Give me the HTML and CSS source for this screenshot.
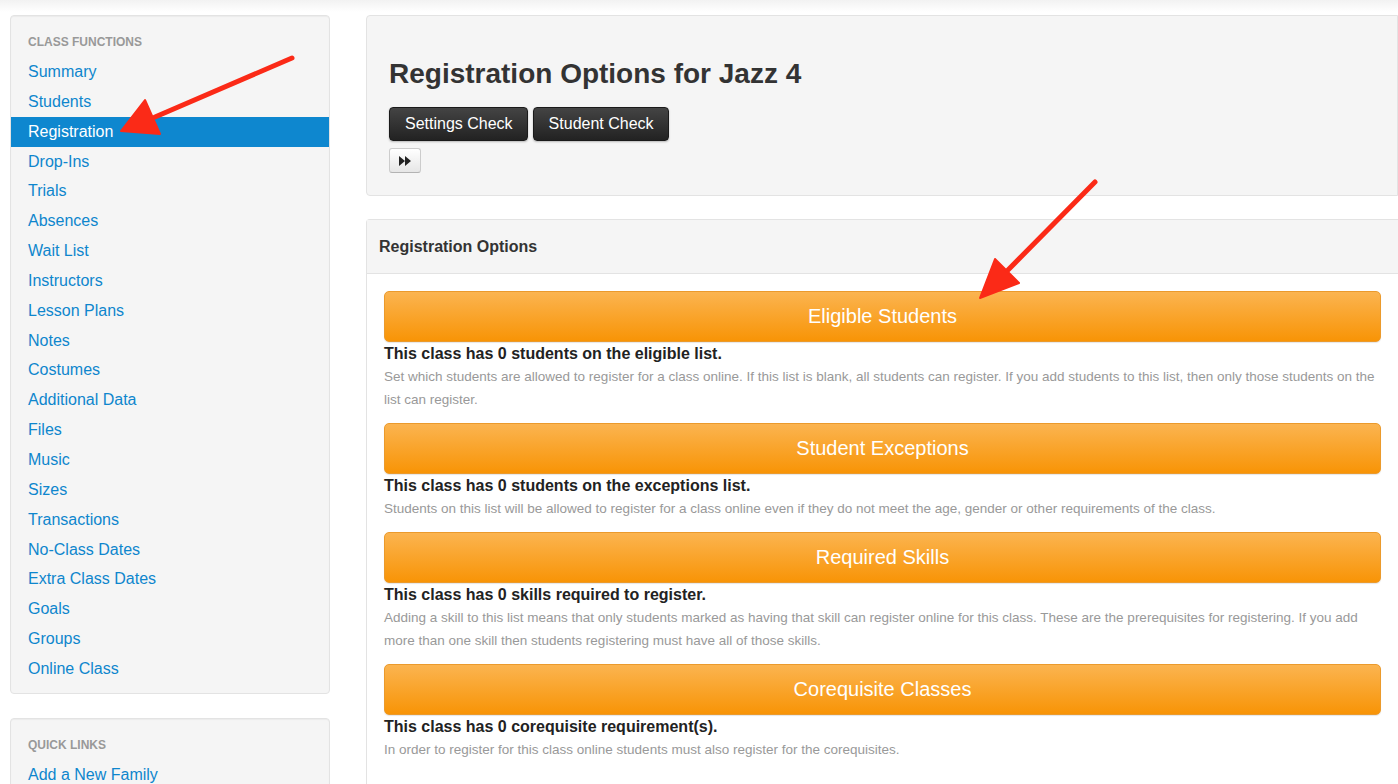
FILE: index.html
```html
<!DOCTYPE html>
<html>
<head>
    <link rel="stylesheet" href="styles.css">
</head>
<body>
    <div class="page">
        <div class="sidebar">
            <div class="well">
                <div class="nav-header">Class Functions</div>
                <a class="nav-link" href="#">Summary</a>
                <a class="nav-link" href="#">Students</a>
                <a class="nav-link active" href="#">Registration</a>
                <a class="nav-link" href="#">Drop-Ins</a>
                <a class="nav-link" href="#">Trials</a>
                <a class="nav-link" href="#">Absences</a>
                <a class="nav-link" href="#">Wait List</a>
                <a class="nav-link" href="#">Instructors</a>
                <a class="nav-link" href="#">Lesson Plans</a>
                <a class="nav-link" href="#">Notes</a>
                <a class="nav-link" href="#">Costumes</a>
                <a class="nav-link" href="#">Additional Data</a>
                <a class="nav-link" href="#">Files</a>
                <a class="nav-link" href="#">Music</a>
                <a class="nav-link" href="#">Sizes</a>
                <a class="nav-link" href="#">Transactions</a>
                <a class="nav-link" href="#">No-Class Dates</a>
                <a class="nav-link" href="#">Extra Class Dates</a>
                <a class="nav-link" href="#">Goals</a>
                <a class="nav-link" href="#">Groups</a>
                <a class="nav-link" href="#">Online Class</a>
            </div>
            <div class="well">
                <div class="nav-header">Quick Links</div>
                <a class="nav-link" href="#">Add a New Family</a>
            </div>
        </div>

        <div class="main">
            <div class="title-panel">
                <h1 class="title">Registration Options for Jazz 4</h1>
                <div class="btn-row">
                    <button class="btn-dark">Settings Check</button>
                    <button class="btn-dark">Student Check</button>
                </div>
                <button class="btn-small">
                    <svg width="12" height="10" viewBox="0 0 12 10"><path d="M0 0 L6 5 L0 10 Z M6 0 L12 5 L6 10 Z" fill="#222"/></svg>
                </button>
            </div>

            <div class="panel">
                <div class="panel-heading">Registration Options</div>
                <div class="panel-body">
                    <button class="btn-orange">Eligible Students</button>
                    <div class="opt-title">This class has 0 students on the eligible list.</div>
                    <div class="opt-desc">Set which students are allowed to register for a class online. If this list is blank, all students can register. If you add students to this list, then only those students on the list can register.</div>

                    <button class="btn-orange">Student Exceptions</button>
                    <div class="opt-title">This class has 0 students on the exceptions list.</div>
                    <div class="opt-desc">Students on this list will be allowed to register for a class online even if they do not meet the age, gender or other requirements of the class.</div>

                    <button class="btn-orange">Required Skills</button>
                    <div class="opt-title">This class has 0 skills required to register.</div>
                    <div class="opt-desc">Adding a skill to this list means that only students marked as having that skill can register online for this class. These are the prerequisites for registering. If you add more than one skill then students registering must have all of those skills.</div>

                    <button class="btn-orange">Corequisite Classes</button>
                    <div class="opt-title">This class has 0 corequisite requirement(s).</div>
                    <div class="opt-desc">In order to register for this class online students must also register for the corequisites.</div>
                </div>
            </div>
        </div>
    </div>

    <svg class="arrows" width="1398" height="784" viewBox="0 0 1398 784">
        <g fill="#fb2a17" stroke="#fb2a17" stroke-linecap="round">
            <line x1="292" y1="58" x2="155" y2="117" stroke-width="5"/>
            <polygon points="121,131 145,100 160,134" stroke-width="2" stroke-linejoin="round"/>
            <line x1="1095" y1="182" x2="1008" y2="270" stroke-width="5"/>
            <polygon points="980,298 995,259 1019,283" stroke-width="2" stroke-linejoin="round"/>
        </g>
    </svg>
</body>
</html>
```

FILE: styles.css
```css
body
{
    margin: 0;
    font-family: "Liberation Sans", Arial, sans-serif;
    color: #333;
    background: linear-gradient(#f2f2f2, #ffffff 12px) no-repeat;
    background-color: #fff;
    height: 784px;
    overflow: hidden;
}
.page
{
    display: flex;
    gap: 36px;
    padding: 15px 0 0 10px;
}
.sidebar
{
    width: 320px;
    flex-shrink: 0;
}
.well
{
    background-color: #f5f5f5;
    border: 1px solid #e3e3e3;
    border-radius: 4px;
    padding: 11px 0 9px 0;
    margin-bottom: 24px;
    box-shadow: inset 0 1px 1px rgba(0,0,0,0.04);
}
.nav-header
{
    font-size: 12px;
    font-weight: bold;
    text-transform: uppercase;
    color: #999;
    line-height: 30px;
    padding-left: 17px;
}
.nav-link
{
    display: block;
    font-size: 16px;
    line-height: 29.85px;
    height: 29.85px;
    color: #0e86cd;
    text-decoration: none;
    padding-left: 17px;
}
.nav-link.active
{
    background-color: #0e87cf;
    color: #fff;
}
.main
{
    flex: 1;
}
.title-panel
{
    background-color: #f5f5f5;
    border: 1px solid #e3e3e3;
    border-radius: 4px 0 0 4px;
    padding: 41px 22px 22px 22px;
    margin-bottom: 23px;
}
.title
{
    font-size: 28px;
    line-height: 34px;
    margin: 0 0 16px 0;
    color: #333;
}
.btn-row
{
    display: flex;
    gap: 5px;
    margin-bottom: 7px;
}
.btn-dark
{
    font-family: "Liberation Sans", Arial, sans-serif;
    font-size: 16px;
    height: 34px;
    padding: 0 14px 0 15px;
    color: #fff;
    background: linear-gradient(#444, #222);
    border: 1px solid #1a1a1a;
    border-radius: 4px;
    box-shadow: 0 1px 2px rgba(0,0,0,0.25);
}
.btn-small
{
    display: flex;
    align-items: center;
    justify-content: center;
    width: 32px;
    height: 25px;
    padding: 0;
    background: linear-gradient(#fff, #e6e6e6);
    border: 1px solid #ccc;
    border-bottom-color: #b3b3b3;
    border-radius: 3px;
}
.panel
{
    border: 1px solid #e3e3e3;
    border-right: none;
    border-radius: 4px 0 0 0;
    height: 600px;
}
.panel-heading
{
    background-color: #f5f5f5;
    border-bottom: 1px solid #e3e3e3;
    font-size: 16px;
    font-weight: bold;
    line-height: 53px;
    padding-left: 12px;
}
.panel-body
{
    padding: 17px 17px 0 17px;
    background-color: #fff;
}
.btn-orange
{
    display: block;
    width: 100%;
    height: 51px;
    font-family: "Liberation Sans", Arial, sans-serif;
    font-size: 20px;
    color: #fff;
    background: linear-gradient(#fbb450, #f89406);
    border: 1px solid #eb9a2c;
    border-radius: 5px;
    box-shadow: 0 1px 1px rgba(0,0,0,0.1);
}
.opt-title
{
    font-size: 16px;
    font-weight: bold;
    line-height: 23px;
    color: #222;
}
.opt-desc
{
    font-size: 13.5px;
    line-height: 23px;
    color: #999;
    margin-bottom: 12px;
}
.arrows
{
    position: absolute;
    left: 0;
    top: 0;
    pointer-events: none;
}
```
